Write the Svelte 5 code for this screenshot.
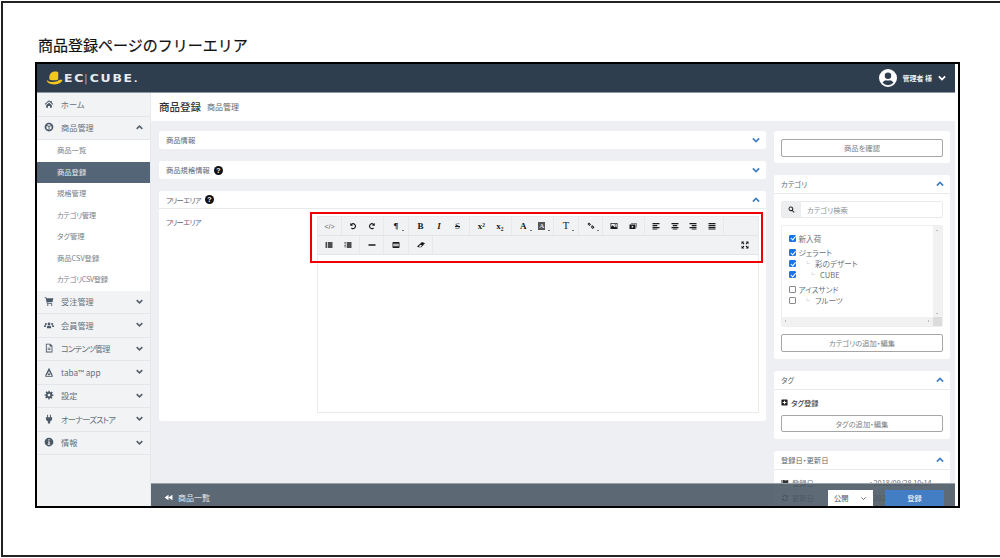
<script>
  const paths = {
    home: 'M8 2 1 8l.8 1L8 4l6.2 5 .8-1-2.5-2V3h-2v1.4zM3.5 9.6 8 5.8l4.5 3.8V14H9.6v-3H6.4v3H3.5z',
    cube: 'M8 1a7 7 0 1 0 0 14A7 7 0 0 0 8 1zM8 3.4l3.6 1.5L8 6.4 4.4 4.9zM4 6.2l3.3 1.4v4.6L4 10.6zm8 0v4.4l-3.3 1.6V7.6z',
    cart: 'M1 2h2.6l.4 1.6h11l-1.6 6.2H5.4l.3 1.4H13v1.3H4.6L2.6 3.3H1zM6 13.2a1.3 1.3 0 1 1 0 2.6 1.3 1.3 0 0 1 0-2.6zm6.2 0a1.3 1.3 0 1 1 0 2.6 1.3 1.3 0 0 1 0-2.6z',
    users: 'M8 4a2.2 2.2 0 1 1 0 4.4A2.2 2.2 0 0 1 8 4zM3 4.6a1.7 1.7 0 1 1 0 3.4 1.7 1.7 0 0 1 0-3.4zm10 0a1.7 1.7 0 1 1 0 3.4 1.7 1.7 0 0 1 0-3.4zM4.6 13v-1.6c0-1.5 1-2.4 2-2.4h2.8c1 0 2 .9 2 2.4V13zM0 11V9.8c0-1 .7-1.3 1.6-1.3h2c-.5.6-.8 1.3-.8 2.5zm16 0h-2.8c0-1.2-.3-1.9-.8-2.5h2c.9 0 1.6.3 1.6 1.3z',
    file: 'M3 1h7l3.5 3.5V15H3zM4.4 2.4v11.2h7.7V5.4H9V2.4zM5.8 7.4h4.6v1.2H5.8zm0 2.4h4.6V11H5.8z',
    taba: 'M8 1l3 6 3.4 7H12L8 6.2 4 14H1.6l3.4-7zM8 8.6l2.2 4.4H5.8zM2 14.4h12v1H2z',
    cog: 'M7 1h2l.4 2.1 1.4.6 1.8-1.2 1.4 1.4-1.2 1.8.6 1.4L15 7v2l-2.1.4-.6 1.4 1.2 1.8-1.4 1.4-1.8-1.2-1.4.6L9 15H7l-.4-2.1-1.4-.6-1.8 1.2-1.4-1.4 1.2-1.8-.6-1.4L1 9V7l2.1-.4.6-1.4-1.2-1.8 1.4-1.4 1.8 1.2 1.4-.6zM8 5.8a2.2 2.2 0 1 0 0 4.4 2.2 2.2 0 0 0 0-4.4z',
    plug: 'M5 1h1.5v4h3V1H11v4h2v2.5c0 2-1.3 3.6-3.2 4V15H6.2v-3.5C4.3 11 3 9.5 3 7.5V5h2z',
    info: 'M8 1a7 7 0 1 0 0 14A7 7 0 0 0 8 1zM7 3.6h2v2H7zM6.4 7H9v4h1v1.4H6V11h1V8.4h-.6z',
    rewind: 'M8 3v10L1 8zM15 3v10L8 8z',
    search: 'M6.5 1a5.5 5.5 0 0 1 4.4 8.8l4 4-1.5 1.5-4-4A5.5 5.5 0 1 1 6.5 1zm0 2.2a3.3 3.3 0 1 0 0 6.6 3.3 3.3 0 0 0 0-6.6z',
    plus: 'M2 1h12a1 1 0 0 1 1 1v12a1 1 0 0 1-1 1H2a1 1 0 0 1-1-1V2a1 1 0 0 1 1-1zm5 3v3H4v2h3v3h2V9h3V7H9V4z',
    flag: 'M1 2h1.5v12H1zM3.5 2.5c3-1.2 5 1 8 .2l3-.7v7c-3 1.5-5.5.5-8 .2l-3 .5z',
    refresh: 'M8 2a6 6 0 0 1 4.3 1.8L14 2v5H9l2-2a4 4 0 0 0-6.8 1.5L2.3 6A6 6 0 0 1 8 2zM2 9h5l-2 2a4 4 0 0 0 6.8-1.5l1.9.5A6 6 0 0 1 3.7 12.2L2 14z',
    user: 'M8 0a8 8 0 1 0 0 16A8 8 0 0 0 8 0zm0 3a2.9 2.9 0 1 1 0 5.8A2.9 2.9 0 0 1 8 3zm0 11.4a6.4 6.4 0 0 1-4.8-2.2c.6-1.3 1.9-2.3 3-2.3.6.3 1.1.4 1.8.4s1.2-.1 1.8-.4c1.1 0 2.4 1 3 2.3A6.4 6.4 0 0 1 8 14.4z',
    undo: 'M2.5 2v5.500H8L6 5.400A3.600 3.600 0 1 1 5.600 11l-1.500 1.800A5.900 5.900 0 1 0 4.400 3.700z',
    redo: 'M13.500 2v5.500H8L10 5.400A3.600 3.600 0 1 0 10.400 11l1.500 1.800A5.900 5.900 0 1 1 11.600 3.700z',
    list: 'M1 2.500h3v3H1zM5.500 2.500H15v3H5.500zM1 6.500h3v3H1zM5.500 6.500H15v3H5.500zM1 10.500h3v3H1zM5.500 10.500H15v3H5.500z',
    ol: 'M1 2h2.500v1.500H1zM1 5h2.500v1.500H1zM1 8h2.500v1.500H1zM1 11h2.500v1.500H1zM5.500 2.500H15v3H5.500zM5.500 6.500H15v3H5.500zM5.500 10.500H15v3H5.500z',
    hr: 'M1 6.500h14v3H1z',
    table: 'M2.500 2h11A1.500 1.500 0 0 1 15 3.500v9a1.500 1.500 0 0 1-1.500 1.500h-11A1.500 1.500 0 0 1 1 12.500v-9A1.500 1.500 0 0 1 2.500 2zm-.2 3.500v2h11.400v-2zm0 3.200v2h11.400v-2z',
    eraser: 'M10 2 16 4.500 8.500 12.500H3L0 11zM3.500 11.500h4.400l2-2.400-3.500-1.800z',
    image: 'M1 2h14v12H1zM2.500 3.500v6l3-3 3.500 4 2-2 2.500 2.500v-7.500zM10.500 4.500a1.300 1.300 0 1 1 0 2.600 1.300 1.300 0 0 1 0-2.600z',
    video: 'M4 2h11v9h-1V3H4zM1 5h12v9H1zM5.500 7v5l4-2.500z',
    alignLeft: 'M1 2h14v2.500H1zM1 6h9.500v2.500H1zM1 10h14v2.500H1zM1 13.500h9.500V15H1z',
    alignCenter: 'M1 2h14v2.500H1zM3.500 6h9v2.500h-9zM1 10h14v2.500H1zM3.500 13.500h9V15h-9z',
    alignRight: 'M1 2h14v2.500H1zM5.500 6H15v2.500H5.500zM1 10h14v2.500H1zM5.500 13.500H15V15H5.500z',
    justify: 'M1 2h14v2.500H1zM1 6h14v2.500H1zM1 10h14v2.500H1zM1 13.500h14V15H1z',
    link: 'M1 4 4 1l4 4-1.300 1.300L4 3.700 3.500 4.200l2.700 2.700L5 8zM8 8l3-1.500 4 4-3.500 3.500-4-4 1.300-1.300 2.700 2.700 1-1L9.800 8.700l-1 1z',
    expand: 'M1 1h5.500L4.600 2.900 6.800 5 5 6.800 2.900 4.600 1 6.500zM15 1v5.500l-1.900-1.900L11 6.800 9.200 5l2.200-2.100L9.500 1zM1 15V9.500l1.900 1.900L5 9.200 6.800 11l-2.200 2.100L6.500 15zM15 15H9.500l1.900-1.900L9.200 11 11 9.200l2.100 2.200L15 9.500z'
  };

  const subMenu = [
    { label: '商品一覧' },
    { label: '商品登録' },
    { label: '規格管理' },
    { label: 'カテゴリ管理', tight: true },
    { label: 'タグ管理' },
    { label: '商品CSV登録' },
    { label: 'カテゴリCSV登録', tight: true }
  ];
  const lowerMenu = [
    { icon: 'cart', label: '受注管理' },
    { icon: 'users', label: '会員管理' },
    { icon: 'file', label: 'コンテンツ管理', tight: true },
    { icon: 'taba', label: 'taba™ app' },
    { icon: 'cog', label: '設定' },
    { icon: 'plug', label: 'オーナーズストア', tight: true },
    { icon: 'info', label: '情報' }
  ];

  // group width, then its buttons
  const toolbarTop = [
    { w: 24, items: [{ t: '</>', c: 'code' }] },
    { w: 42, items: [{ i: 'undo' }, { i: 'redo' }] },
    { w: 25, items: [{ t: '¶', c: 'serif', caret: true }] },
    { w: 61, items: [{ t: 'B', c: 'serif' }, { t: 'I', c: 'serif ital' }, { t: 'S', c: 'serif strike' }] },
    { w: 42, items: [{ t: 'x²', c: 'serif' }, { t: 'x₂', c: 'serif' }] },
    { w: 42, items: [{ t: 'A', c: 'serif', caret: true }, { t: 'A', c: 'boxed', caret: true }] },
    { w: 25, items: [{ t: 'T', c: 'serif thin', caret: true }] },
    { w: 24, items: [{ i: 'link', caret: true }] },
    { w: 42, items: [{ i: 'image' }, { i: 'video' }] },
    { w: 79, items: [{ i: 'alignLeft' }, { i: 'alignCenter' }, { i: 'alignRight' }, { i: 'justify' }] }
  ];
  const toolbarBottom = [
    { w: 42, items: [{ i: 'list' }, { i: 'ol' }] },
    { w: 24, items: [{ i: 'hr' }] },
    { w: 25, items: [{ i: 'table' }] },
    { w: 24, items: [{ i: 'eraser' }] }
  ];

  const categories = [
    { label: '新入荷', on: true, depth: 0, gap: false },
    { label: 'ジェラート', on: true, depth: 0, gap: true },
    { label: '彩のデザート', on: true, depth: 1, gap: false },
    { label: 'CUBE', on: true, depth: 2, gap: false },
    { label: 'アイスサンド', on: false, depth: 0, gap: true },
    { label: 'フルーツ', on: false, depth: 1, gap: false }
  ];
</script>

{#snippet icon(name, cls = '')}
  <svg class="icon {cls}" viewBox="0 0 16 16" aria-hidden="true"><path fill-rule="evenodd" d={paths[name]} /></svg>
{/snippet}

{#snippet chevron(up = false, cls = '')}
  <svg class="chev {cls}" viewBox="0 0 16 16" aria-hidden="true">
    <path d={up ? 'M3 10.5 8 5.5l5 5' : 'M3 5.5l5 5 5-5'} />
  </svg>
{/snippet}

{#snippet toolRow(groups)}
  {#each groups as group}
    <div class="tgroup" style="width: {group.w}px">
      {#each group.items as b}
        <span class="tbtn">
          {#if b.i}
            {@render icon(b.i)}
          {:else}
            <span class="tlabel {b.c}">{b.t}</span>
          {/if}
          {#if b.caret}<i class="caret"></i>{/if}
        </span>
      {/each}
    </div>
  {/each}
{/snippet}

<div class="page">
  <h1>商品登録ページのフリーエリア</h1>

  <div class="shot">
    <div class="inner">
      <header class="topbar">
        <div class="logo">
          <svg class="hat" viewBox="0 0 18 15" aria-hidden="true">
            <path fill="#f2c81e" d="M3.5 6C3.8 2.5 6.5 0.500 10 0.500c1.500 0 2.500.4 3 1V9c-3 1.300-6.500 1.300-9.500 0z" />
            <path fill="#f2c81e" d="M0.500 9.500c1 1.200 2.500 1.800 3.500 2 3.500.6 8 .2 10-1.800 1-.4 2.500-.6 3.500-.2-.5 2.600-3.500 5-8.500 5S1 12.500.5 9.500z" />
          </svg>
          <span class="wordmark">EC<em>|</em>CUBE<small>.</small></span>
        </div>
        <div class="account">
          {@render icon('user', 'avatar')}
          <span>管理者 様</span>
          {@render chevron(false, 'white')}
        </div>
      </header>

      <div class="body">
        <nav class="sidebar">
          <div class="mitem">
            {@render icon('home', 'micon')}
            <span>ホーム</span>
          </div>
          <div class="mitem">
            {@render icon('cube', 'micon')}
            <span>商品管理</span>
            {@render chevron(true, 'mchev')}
          </div>
          <div class="sub">
            {#each subMenu as item}
              <div class="subitem" class:active={item.label === '商品登録'} class:tight={item.tight}>{item.label}</div>
            {/each}
          </div>
          {#each lowerMenu as item}
            <div class="mitem">
              {@render icon(item.icon, 'micon')}
              <span class:tight={item.tight}>{item.label}</span>
              {@render chevron(false, 'mchev')}
            </div>
          {/each}
        </nav>

        <main class="main">
          <div class="titlebar">
            <h2>商品登録</h2>
            <span>商品管理</span>
          </div>

          <div class="columns">
            <div class="leftcol">
              <section class="card">
                <div class="chead">
                  <span>商品情報</span>
                  {@render chevron(false, 'blue')}
                </div>
              </section>
              <section class="card">
                <div class="chead">
                  <span>商品規格情報</span>
                  <b class="help">?</b>
                  {@render chevron(false, 'blue')}
                </div>
              </section>
              <section class="card free">
                <div class="chead lined">
                  <span class="tight">フリーエリア</span>
                  <b class="help">?</b>
                  {@render chevron(true, 'blue')}
                </div>
                <div class="fbody">
                  <div class="flabel tight">フリーエリア</div>
                  <div class="editor">
                    <div class="toolbar">
                      <div class="trow">{@render toolRow(toolbarTop)}</div>
                      <div class="trow">
                        {@render toolRow(toolbarBottom)}
                        <span class="tbtn end">{@render icon('expand')}</span>
                      </div>
                    </div>
                    <div class="highlight"></div>
                  </div>
                </div>
              </section>
            </div>

            <aside class="rightcol">
              <section class="card pad">
                <button class="outline">商品を確認</button>
              </section>

              <section class="card">
                <div class="chead lined side">
                  <span>カテゴリ</span>
                  {@render chevron(true, 'blue')}
                </div>
                <div class="cbody">
                  <div class="search">
                    <span class="sicon">{@render icon('search')}</span>
                    <span class="ph">カテゴリ検索</span>
                  </div>
                  <div class="tree">
                    <div class="treelist">
                      {#each categories as c}
                        <label class="tnode" class:gap={c.gap}>
                          <input type="checkbox" checked={c.on} />
                          {#if c.depth}<span class="branch" class:deep={c.depth === 2}>└</span>{/if}
                          <span>{c.label}</span>
                        </label>
                      {/each}
                    </div>
                    <div class="vbar"><i class="up"></i><i class="down"></i></div>
                    <div class="hbar"><i class="left"></i><i class="right"></i></div>
                  </div>
                  <button class="outline">カテゴリの追加・編集</button>
                </div>
              </section>

              <section class="card">
                <div class="chead lined side">
                  <span>タグ</span>
                  {@render chevron(true, 'blue')}
                </div>
                <div class="cbody tag">
                  <div class="tagadd">{@render icon('plus')}<span>タグ登録</span></div>
                  <button class="outline">タグの追加・編集</button>
                </div>
              </section>

              <section class="card">
                <div class="chead lined side">
                  <span>登録日・更新日</span>
                  {@render chevron(true, 'blue')}
                </div>
                <div class="dates">
                  <div>{@render icon('flag')}<span>登録日</span><span class="dval">: 2018/09/28 10:14</span></div>
                  <div>{@render icon('refresh')}<span>更新日</span><span class="dval">: 2020/09/28 10:14</span></div>
                </div>
              </section>
            </aside>
          </div>

          <div class="actionbar">
            <div class="back">{@render icon('rewind')}<span>商品一覧</span></div>
            <div class="actions">
              <span class="select">公開{@render chevron(false)}</span>
              <span class="save">登録</span>
            </div>
          </div>
        </main>
      </div>
    </div>
  </div>
</div>

<style>
  :global(body) {
    margin: 0;
    background: #fff;
    font-family: "Noto Sans CJK JP", "Noto Sans", sans-serif;
  }

  .page {
    box-sizing: border-box;
    height: 556px;
    margin: 1px 0 1px 1px;
    padding: 0 0 0 32px;
    border: solid #222;
    border-width: 2px 0 2px 2px;
    background: #fff;
    overflow: hidden;
  }

  h1 {
    margin: 0;
    padding: 31px 0 0 3px;
    height: 28px;
    font-size: 15px;
    line-height: 22px;
    font-weight: 400;
    color: #111;
    -webkit-text-stroke: 0.2px #111;
  }

  .shot {
    box-sizing: border-box;
    width: 925px;
    height: 446px;
    border: 2px solid #000;
    background: #fff;
    overflow: hidden;
    font-feature-settings: "palt";
  }

  .inner {
    display: flex;
    flex-direction: column;
    width: 918px;
    height: 442px;
  }

  .tight {
    letter-spacing: -0.7px;
  }

  .subitem.tight {
    letter-spacing: -0.35px;
  }

  .topbar {
    flex: 0 0 28px;
    display: flex;
    align-items: center;
    justify-content: space-between;
    background: #2f3e4e;
    border-bottom: 1px solid #8d959d;
  }

  .logo {
    display: flex;
    align-items: center;
    gap: 1px;
    padding-left: 9px;
  }

  .hat {
    width: 17px;
    height: 14px;
  }

  .wordmark {
    font-family: "DejaVu Sans", sans-serif;
    font-size: 10px;
    font-weight: 700;
    letter-spacing: 1.4px;
    color: #e9ebee;
    transform: scaleX(1.24);
    transform-origin: left center;
  }

  .wordmark em {
    font-style: normal;
    font-weight: 400;
    margin: 0 0 0 -1px;
    color: #9aa3ac;
  }

  .wordmark small {
    font-size: 8px;
  }

  .account {
    display: flex;
    align-items: center;
    gap: 5px;
    padding-right: 8px;
    font-size: 7px;
    font-weight: 700;
    color: #eceef0;
  }

  .icon {
    display: block;
    width: 9px;
    height: 9px;
    fill: currentColor;
    flex: none;
  }

  .icon.avatar {
    width: 18px;
    height: 18px;
    color: #fff;
  }

  .chev {
    display: block;
    width: 10px;
    height: 10px;
    flex: none;
    fill: none;
    stroke: currentColor;
    stroke-width: 2.8;
  }

  .chev.white {
    color: #fff;
  }

  .chev.blue {
    color: #437ec4;
    margin-left: auto;
  }

  .body {
    flex: 1;
    display: flex;
    min-height: 0;
  }

  .sidebar {
    box-sizing: border-box;
    flex: 0 0 114px;
    background: #f2f3f5;
    border-right: 1px solid #e6e8ec;
  }

  .mitem {
    box-sizing: border-box;
    display: flex;
    align-items: center;
    height: 23.5px;
    padding: 0 6px 1px 7px;
    border-bottom: 1px solid #e2e5ea;
    font-size: 8.2px;
    color: #67717b;
  }

  .mitem :global(.micon) {
    width: 10px;
    height: 10px;
    margin-right: 7px;
    color: #4c5a68;
  }

  .mitem :global(.mchev) {
    margin-left: auto;
    width: 9px;
    height: 9px;
    color: #56626e;
  }

  .sub {
    background: #fff;
  }

  .subitem {
    box-sizing: border-box;
    height: 21.5px;
    padding-left: 20px;
    font-size: 7.3px;
    line-height: 21.5px;
    color: #7a828a;
  }

  .subitem.active {
    background: #536577;
    color: #e6e9ec;
  }

  .main {
    position: relative;
    flex: 1;
    display: flex;
    flex-direction: column;
    min-width: 0;
    background: #eeeff2;
    overflow: hidden;
  }

  .titlebar {
    box-sizing: border-box;
    flex: 0 0 28px;
    display: flex;
    align-items: center;
    gap: 6px;
    padding: 0 0 1px 8px;
    background: #fff;
    font-size: 8px;
    color: #666;
  }

  h2 {
    margin: 0;
    font-size: 10.5px;
    font-weight: 500;
    color: #333;
  }

  .columns {
    display: flex;
    gap: 8px;
    padding: 10px 5px 0 8px;
    align-items: flex-start;
  }

  .leftcol {
    flex: 0 0 607px;
    display: flex;
    flex-direction: column;
    gap: 12px;
  }

  .rightcol {
    flex: 0 0 176px;
    display: flex;
    flex-direction: column;
    gap: 12px;
  }

  .card {
    background: #fff;
    border-radius: 2px;
  }

  .card.pad {
    padding: 8px 7px 6px;
  }

  .chead {
    box-sizing: border-box;
    display: flex;
    align-items: center;
    gap: 4px;
    height: 18px;
    padding: 0 5px 0 7px;
    font-size: 7.3px;
    color: #5f6770;
  }

  .chead.lined {
    border-bottom: 1px solid #e8eaed;
  }

  .chead.side {
    height: 19px;
  }

  .help {
    width: 9px;
    height: 9px;
    border-radius: 50%;
    background: #111;
    color: #fff;
    font: 700 7px/9px "Liberation Sans", sans-serif;
    text-align: center;
  }

  .free {
    height: 230px;
  }

  .fbody {
    display: flex;
    padding: 7px 7px 0 7px;
  }

  .flabel {
    flex: 0 0 151px;
    font-size: 7.3px;
    line-height: 12px;
    color: #5f6770;
  }

  .editor {
    position: relative;
    box-sizing: border-box;
    width: 442px;
    height: 197px;
    border: 1px solid #e8eaed;
  }

  .toolbar {
    background: #f1f2f4;
  }

  .trow {
    box-sizing: border-box;
    display: flex;
    height: 19px;
    border-bottom: 1px solid #e2e5e8;
  }

  .tgroup {
    box-sizing: border-box;
    display: flex;
    justify-content: center;
    flex: none;
    border-right: 1px solid #e6e8ea;
  }

  .tbtn {
    position: relative;
    display: flex;
    align-items: center;
    justify-content: center;
    flex: none;
    width: 18.5px;
    color: #1a1a1a;
  }

  .tbtn.end {
    width: 27px;
    margin-left: auto;
  }

  .tbtn :global(.icon) {
    width: 8px;
    height: 8px;
  }

  .tlabel {
    font-size: 9px;
    line-height: 1;
  }

  .serif {
    font-family: "Liberation Serif", serif;
    font-weight: 700;
  }

  .ital {
    font-style: italic;
  }

  .strike {
    font-weight: 400;
    text-decoration: line-through;
  }

  .thin {
    font-weight: 400;
    font-size: 10.5px;
  }

  .code {
    font-family: "Liberation Sans", sans-serif;
    font-size: 7px;
    color: #666;
  }

  .boxed {
    padding: 0 1px;
    background: #555;
    color: #ddd;
    font: 700 7px/8px "Liberation Serif", serif;
  }

  .caret {
    position: absolute;
    right: 1px;
    bottom: 4px;
    width: 2px;
    height: 1px;
    background: #777;
  }

  .highlight {
    position: absolute;
    left: -8px;
    top: -5px;
    width: 449px;
    height: 47px;
    border: 2.5px solid #f00000;
    pointer-events: none;
  }

  .cbody {
    padding: 7px;
  }

  .search {
    box-sizing: border-box;
    display: flex;
    align-items: center;
    height: 17px;
    border: 1px solid #e8eaed;
    border-radius: 2px;
    font-size: 7.3px;
    color: #8a9097;
  }

  .sicon {
    align-self: stretch;
    display: flex;
    align-items: center;
    justify-content: center;
    width: 19px;
    margin-right: 6px;
    background: #eceef0;
    color: #222;
  }

  .sicon :global(.icon) {
    width: 7px;
    height: 7px;
  }

  .tree {
    position: relative;
    box-sizing: border-box;
    height: 102px;
    margin: 7px 0;
    border: 1px solid #eceef0;
    border-radius: 2px;
  }

  .treelist {
    padding: 6.5px 0 0 7px;
    font-size: 7.6px;
    color: #6a7076;
  }

  .tnode {
    display: flex;
    align-items: center;
    gap: 2.5px;
    height: 11px;
  }

  .tnode.gap {
    margin-top: 3.5px;
  }

  .tnode input {
    appearance: none;
    box-sizing: border-box;
    position: relative;
    width: 7px;
    height: 7px;
    margin: 0;
    border: 1px solid #8a8a8a;
    border-radius: 1px;
    background: #fff;
  }

  .tnode input:checked {
    border-color: #1a73e8;
    background: #1a73e8;
  }

  .tnode input:checked::after {
    content: "";
    position: absolute;
    left: 1.5px;
    top: -0.5px;
    width: 1.5px;
    height: 3.5px;
    border: solid #fff;
    border-width: 0 1px 1px 0;
    transform: rotate(40deg);
  }

  .branch {
    margin: 0 2.5px 0 5.5px;
    color: #999;
    font-size: 6px;
  }

  .branch.deep {
    margin-left: 10.5px;
  }

  .vbar {
    position: absolute;
    top: 0;
    right: 0;
    bottom: 9px;
    width: 9px;
    background: #f1f1f1;
  }

  .hbar {
    position: absolute;
    left: 0;
    right: 0;
    bottom: 0;
    height: 9px;
    background: #f1f1f1;
  }

  .hbar::after {
    content: "";
    position: absolute;
    right: 0;
    top: 0;
    width: 9px;
    height: 9px;
    background: #dcdcdc;
  }

  .vbar i,
  .hbar i {
    position: absolute;
    width: 0;
    height: 0;
    border: 1.5px solid transparent;
  }

  .up {
    top: 3px;
    left: 3px;
    border-bottom-color: #888 !important;
  }

  .down {
    bottom: 2px;
    left: 3px;
    border-top-color: #888 !important;
  }

  .left {
    left: 2px;
    top: 3px;
    border-right-color: #888 !important;
  }

  .right {
    right: 12px;
    top: 3px;
    border-left-color: #888 !important;
  }

  .outline {
    display: block;
    box-sizing: border-box;
    width: 100%;
    height: 18px;
    padding: 0;
    border: 1px solid #a6a6a6;
    border-bottom-width: 1.5px;
    border-radius: 2px;
    background: #fff;
    font-family: inherit;
    font-feature-settings: inherit;
    font-size: 7.3px;
    color: #7a7f85;
  }

  .cbody.tag {
    padding-top: 6px;
    padding-bottom: 7px;
  }

  .cbody.tag .outline {
    height: 17px;
  }

  .tagadd {
    display: flex;
    align-items: center;
    gap: 3px;
    height: 13px;
    margin-bottom: 6px;
    font-size: 7.3px;
    font-weight: 500;
    color: #444;
  }

  .tagadd :global(.icon) {
    width: 7px;
    height: 7px;
    color: #222;
  }

  .dates {
    padding: 5px 7px;
    font-size: 7.3px;
    color: #6a7076;
  }

  .dates div {
    display: flex;
    align-items: center;
    gap: 3px;
    height: 15px;
  }

  .dates :global(.icon) {
    width: 8px;
    height: 8px;
    color: #333;
  }

  .dval {
    margin-left: 53px;
    white-space: nowrap;
  }

  .actionbar {
    position: absolute;
    left: 0;
    right: 0;
    bottom: 0;
    box-sizing: border-box;
    display: flex;
    justify-content: space-between;
    height: 23px;
    padding-right: 11px;
    background: rgba(72, 85, 98, 0.88);
    border-top: 1px solid #9aa1a8;
    color: #e8eaec;
  }

  .back {
    display: flex;
    align-items: center;
    gap: 5px;
    padding: 5px 0 0 13px;
    font-size: 8px;
  }

  .back :global(.icon) {
    width: 9px;
    height: 9px;
    color: #fff;
  }

  .actions {
    display: flex;
    align-items: flex-end;
    gap: 12px;
  }

  .select {
    box-sizing: border-box;
    display: flex;
    align-items: center;
    justify-content: space-between;
    width: 45px;
    height: 16px;
    padding: 0 6px;
    background: #fff;
    font-size: 7.3px;
    color: #555;
  }

  .select :global(.chev) {
    width: 7px;
    height: 7px;
    stroke-width: 2;
  }

  .save {
    width: 59px;
    height: 16px;
    background: #437ec4;
    color: #fff;
    font-size: 7.3px;
    line-height: 16px;
    text-align: center;
  }
</style>
